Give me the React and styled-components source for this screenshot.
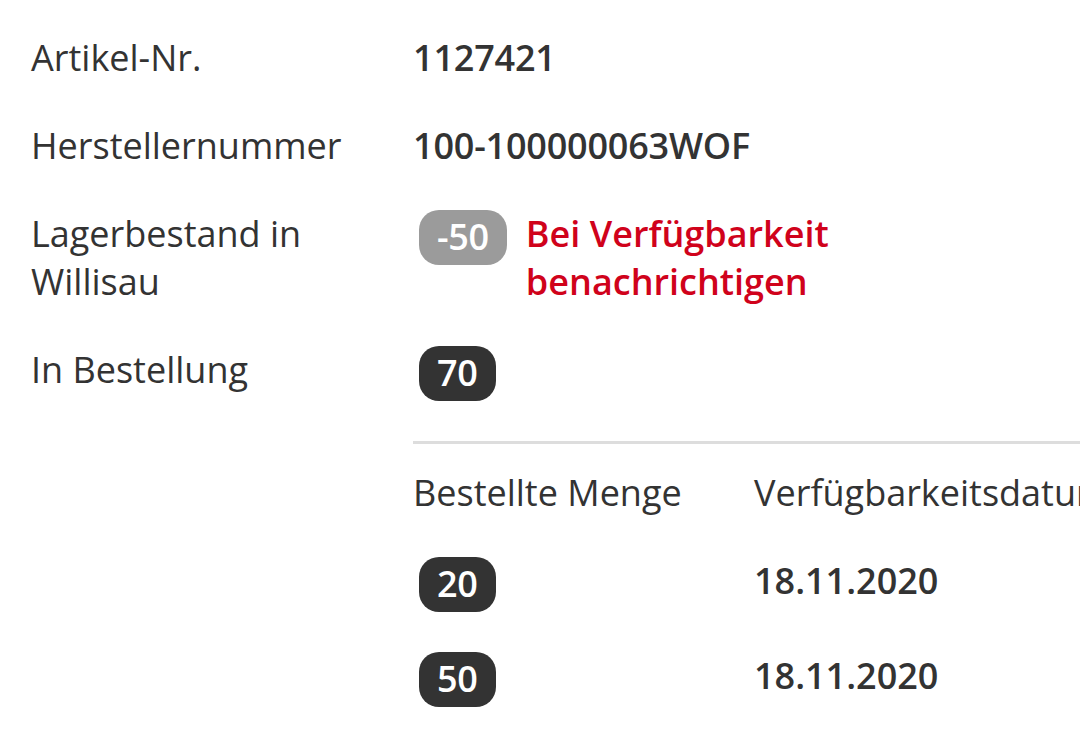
import React from "react";
import styled, { createGlobalStyle } from "styled-components";

const GlobalStyle = createGlobalStyle`
  html, body {
    margin : 0;
    padding : 0;
    background : #ffffff;
    overflow : hidden;
  }
  body {
    font-family : "Open Sans", "Noto Sans", Arial, sans-serif;
    color : #333333;
    -webkit-font-smoothing : antialiased;
  }
`;

const orders = [
    { qty: 20, date: "18.11.2020" },
    { qty: 50, date: "18.11.2020" },
];

const App = () => {
    return (
        <>
            <GlobalStyle />
            <DetailList>
                <Row>
                    <Label>Artikel-Nr.</Label>
                    <Value>1127421</Value>
                </Row>
                <Row>
                    <Label>Herstellernummer</Label>
                    <Value>100-100000063WOF</Value>
                </Row>
                <Row>
                    <Label>Lagerbestand in Willisau</Label>
                    <StockCell>
                        <Badge $muted>-50</Badge>
                        <NotifyLink href="#">Bei Verfügbarkeit benachrichtigen</NotifyLink>
                    </StockCell>
                </Row>
                <Row>
                    <Label>In Bestellung</Label>
                    <StockCell>
                        <Badge>70</Badge>
                    </StockCell>
                </Row>
                <Row>
                    <span />
                    <OrderTable>
                        <TableRow>
                            <HeadCell>Bestellte Menge</HeadCell>
                            <HeadCell>Verfügbarkeitsdatum</HeadCell>
                        </TableRow>
                        {orders.map((o, i) => (
                            <TableRow key={i}>
                                <div><Badge>{o.qty}</Badge></div>
                                <DateCell>{o.date}</DateCell>
                            </TableRow>
                        ))}
                    </OrderTable>
                </Row>
            </DetailList>
        </>
    );
};

const DetailList = styled.div`
    display : flex;
    flex-direction : column;
    gap : 40px;
    padding : 34px 0 0 31px;
    width : 1200px;
`;

const Row = styled.div`
    display : grid;
    grid-template-columns : 382px 1fr;
    align-items : start;
`;

const Label = styled.div`
    font-size : 36px;
    line-height : 48px;
    font-weight : 400;
    color : #333333;
    padding-right : 40px;
`;

const Value = styled.div`
    font-size : 36px;
    line-height : 48px;
    font-weight : 600;
    color : #333333;
    letter-spacing : -0.2px;
`;

const StockCell = styled.div`
    display : flex;
    align-items : flex-start;
    gap : 19px;
`;

const Badge = styled.span`
    display : inline-block;
    box-sizing : border-box;
    height : 55px;
    margin-left : 6px;
    padding : 3px 18px 0;
    border-radius : 20px;
    background : ${(p) => (p.$muted ? "#9b9b9b" : "#333333")};
    color : #ffffff;
    font-size : 36px;
    line-height : 48px;
    font-weight : 600;
    letter-spacing : -0.3px;
`;

const NotifyLink = styled.a`
    max-width : 330px;
    font-size : 36px;
    line-height : 48px;
    font-weight : 600;
    color : #d0021b;
    text-decoration : none;
`;

const OrderTable = styled.div`
    border-top : 3px solid #dddddd;
    padding-top : 25px;
    display : flex;
    flex-direction : column;
    gap : 40px;
`;

const TableRow = styled.div`
    display : grid;
    grid-template-columns : 341px 1fr;
    align-items : start;
`;

const HeadCell = styled.div`
    font-size : 36px;
    line-height : 48px;
    font-weight : 400;
    color : #333333;
    white-space : nowrap;
`;

const DateCell = styled.div`
    font-size : 36px;
    line-height : 48px;
    font-weight : 600;
    color : #333333;
`;

export default App;
